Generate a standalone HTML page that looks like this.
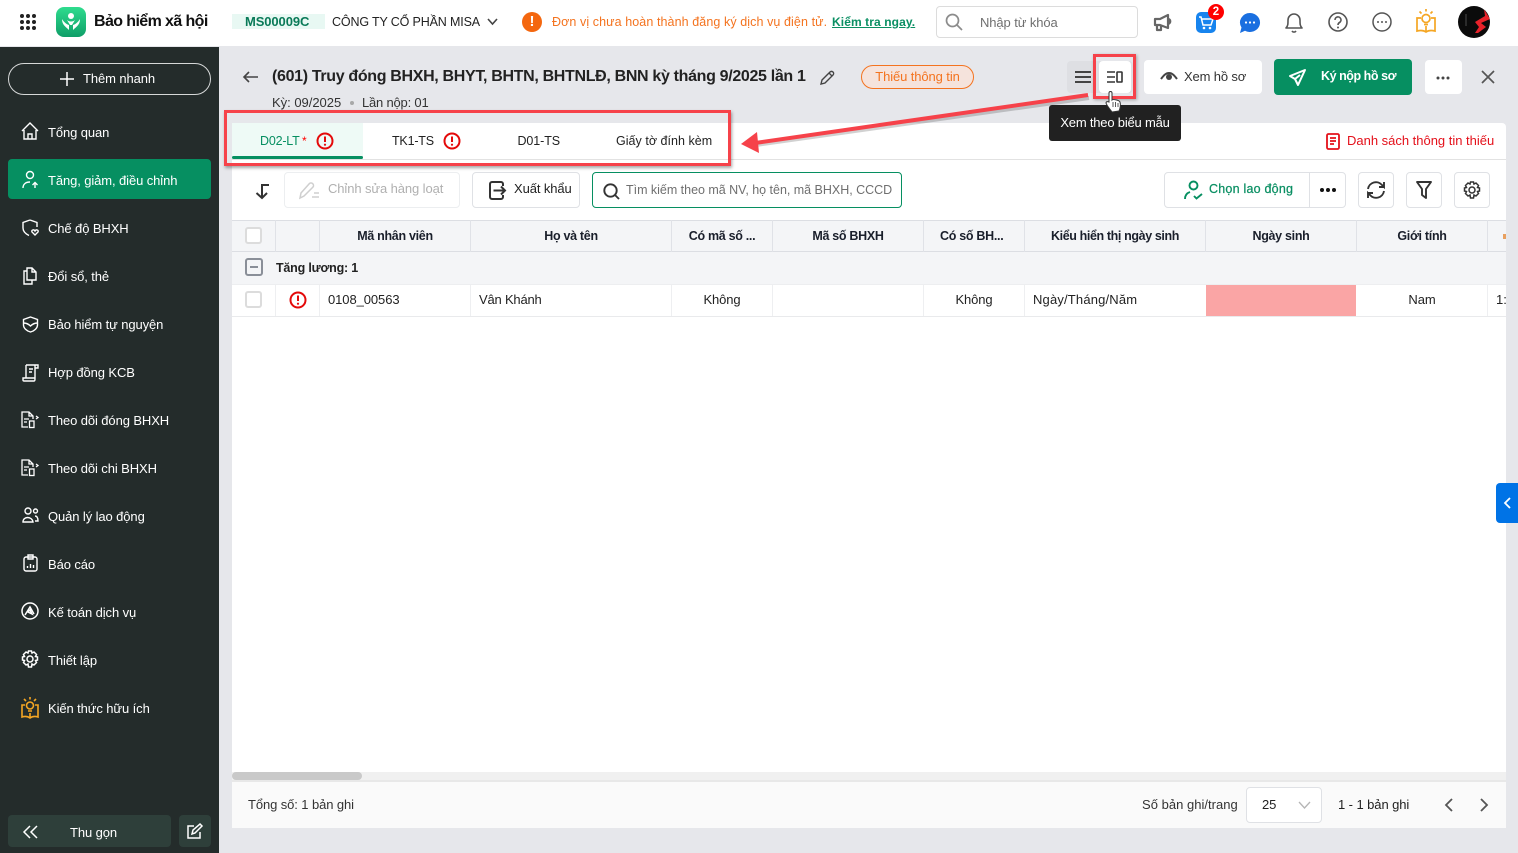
<!DOCTYPE html>
<html lang="vi"><head><meta charset="utf-8"><title>Bảo hiểm xã hội</title>
<style>
*{box-sizing:border-box}
html,body{margin:0;padding:0;width:1518px;height:853px;overflow:hidden;background:#e6e7eb;font-family:"Liberation Sans",sans-serif;font-size:13px;color:#1f1f1f}
.a{position:absolute}
.t{position:absolute;white-space:nowrap;line-height:16px;letter-spacing:-.1px}
.c{text-align:center}
.b{font-weight:700}
svg{position:absolute;overflow:visible;fill:none}
.btn{position:absolute;background:#fff;border:1px solid #dfe1e5;border-radius:4px}
.m{color:#fff;left:48px}
.th{position:absolute;top:228px;font-weight:700;font-size:12.5px;line-height:16px;text-align:center;white-space:nowrap;letter-spacing:-.3px;color:#1a1f2b}
.v{position:absolute;width:1px;background:#e0e2e7}
.cb{position:absolute;width:17px;height:17px;border:2px solid #dcdcdc;border-radius:3px;background:#fff}
.t.m{letter-spacing:-.1px}
</style></head><body>

<!-- top bar -->
<div class="a" style="left:0;top:0;width:1518px;height:46px;background:#fff"></div>
<svg style="left:20px;top:14px" width="16" height="16"><g fill="#222"><circle cx="2" cy="2" r="2"/><circle cx="8" cy="2" r="2"/><circle cx="14" cy="2" r="2"/><circle cx="2" cy="8" r="2"/><circle cx="8" cy="8" r="2"/><circle cx="14" cy="8" r="2"/><circle cx="2" cy="14" r="2"/><circle cx="8" cy="14" r="2"/><circle cx="14" cy="14" r="2"/></g></svg>
<svg style="left:56px;top:7px" width="30" height="30"><defs><linearGradient id="g" x1="0" y1="0" x2="0" y2="1"><stop offset="0" stop-color="#2fdc8e"/><stop offset="1" stop-color="#0f9e68"/></linearGradient></defs><rect width="30" height="30" rx="8" fill="url(#g)"/><circle cx="15" cy="9" r="3" fill="#fff"/><path d="M6 12c0 6 4 8 7 11v-5c-3-1-5-3-7-6zM24 12c0 6-4 8-7 11v-5c3-1 5-3 7-6zM11 13c2 2 6 2 8 0l-3 5h-2z" fill="#fff"/></svg>
<div class="t b" style="left:94px;top:12px;font-size:16px;line-height:20px;color:#111;letter-spacing:-.6px">Bảo hiểm xã hội</div>
<div class="a" style="left:232px;top:14px;width:93px;height:15px;background:#e8f8f3"></div>
<div class="t b" style="left:245px;top:14px;color:#0a7a58;font-size:13px;letter-spacing:-.1px">MS00009C</div>
<div class="t" style="left:332px;top:14px;font-size:12.5px;color:#222;letter-spacing:-.15px">CÔNG TY CỔ PHẦN MISA</div>
<svg style="left:487px;top:18px" width="11" height="8"><path d="M1 1l4.500 5L10 1" stroke="#444" stroke-width="1.600"/></svg>
<div class="a" style="left:522px;top:12px;width:20px;height:20px;border-radius:50%;background:#f4670f;color:#fff;font-weight:700;font-size:15px;line-height:20px;text-align:center">!</div>
<div class="t" style="left:552px;top:14px;color:#f4731f;font-size:12.500px;letter-spacing:.09px">Đơn vị chưa hoàn thành đăng ký dịch vụ điện tử.</div>
<div class="t b" style="left:832px;top:14px;color:#0a8f63;text-decoration:underline;font-size:12px;letter-spacing:.1px">Kiểm tra ngay.</div>
<div class="a" style="left:936px;top:6px;width:202px;height:32px;border:1px solid #dcdcdc;border-radius:4px"></div>
<svg style="left:945px;top:13px" width="18" height="18"><circle cx="7.500" cy="7.500" r="6" stroke="#8c8c8c" stroke-width="1.700"/><path d="M12 12l5 5" stroke="#8c8c8c" stroke-width="1.700"/></svg>
<div class="t" style="left:980px;top:15px;color:#6f6f6f">Nhập từ khóa</div>
<svg style="left:1153px;top:14px" width="20" height="18"><path d="M2 5h5l8-4v13l-8-3H2zM4 11v5h4v-5M15 5c3 .5 3 4 0 5" stroke="#666" stroke-width="2.200" stroke-linejoin="round"/></svg>
<svg style="left:1196px;top:12px" width="20" height="21"><rect width="20" height="21" rx="5" fill="#1784ee"/><path d="M3 5h2l2 8h8l2-6H6" stroke="#fff" stroke-width="1.500"/><circle cx="8" cy="16" r="1.300" fill="#fff"/><circle cx="14" cy="16" r="1.300" fill="#fff"/></svg>
<div class="a b" style="left:1208px;top:4px;width:16px;height:16px;border-radius:50%;background:#f00;color:#fff;font-size:11.500px;line-height:16px;text-align:center;font-weight:700">2</div>
<svg style="left:1240px;top:13px" width="20" height="20"><path d="M10 0a10 9.500 0 1 1-5 17.700L0 20l1.500-5.500A10 9.500 0 0 1 10 0z" fill="#1a6fe0"/><circle cx="6" cy="9.500" r="1.100" fill="#fff"/><circle cx="10" cy="9.500" r="1.100" fill="#fff"/><circle cx="14" cy="9.500" r="1.100" fill="#fff"/></svg>
<svg style="left:1284px;top:12px" width="20" height="21"><path d="M2 16c2-2 2-4 2-8a6 6 0 0 1 12 0c0 4 0 6 2 8zM8 19c1 1.500 3 1.500 4 0" stroke="#555" stroke-width="1.600" stroke-linejoin="round"/></svg>
<svg style="left:1328px;top:12px" width="20" height="20"><circle cx="10" cy="10" r="9" stroke="#555" stroke-width="1.600"/><path d="M7 8a3 3 0 1 1 4.500 2.500c-1 .6-1.500 1-1.500 2.500" stroke="#555" stroke-width="1.600"/><circle cx="10" cy="15.500" r="1" fill="#555"/></svg>
<svg style="left:1372px;top:12px" width="20" height="20"><circle cx="10" cy="10" r="9" stroke="#555" stroke-width="1.500"/><circle cx="6" cy="10" r="1" fill="#555"/><circle cx="10" cy="10" r="1" fill="#555"/><circle cx="14" cy="10" r="1" fill="#555"/></svg>
<svg style="left:1416px;top:9px" width="20" height="23" stroke="#f5a623" stroke-width="1.700"><path d="M5 9H1v13c4-1 7-.5 9 1 2-1.500 5-2 9-1V9h-4M10 17v6"/><circle cx="10" cy="9.500" r="4"/><path d="M8 15.500h4M10 0v2.500M3.500 2.500l2 2M16.500 2.500l-2 2"/></svg>
<svg style="left:1458px;top:6px" width="32" height="32"><defs><clipPath id="av"><circle cx="16" cy="16" r="16"/></clipPath></defs><circle cx="16" cy="16" r="16" fill="#0b0b0b"/><path d="M26 3L32 13 L23 17 L28 21 L20 27 L17 27 L21 21 L17 16 L27 10z" fill="#e8222a" clip-path="url(#av)"/><path d="M8 8v12" stroke="#2b2b2b" stroke-width="2"/></svg>

<!-- sidebar -->
<div class="a" style="left:0;top:47px;width:219px;height:806px;background:#242c2b"></div>
<div class="a" style="left:8px;top:63px;width:203px;height:32px;border:1px solid #d6d8d8;border-radius:16px"></div>
<svg style="left:60px;top:72px" width="14" height="14"><path d="M7 0v14M0 7h14" stroke="#fff" stroke-width="1.500"/></svg>
<div class="t m" style="left:83px;top:71px">Thêm nhanh</div>
<div class="a" style="left:8px;top:159px;width:203px;height:40px;background:#068f61;border-radius:4px"></div>
<div class="t m" style="top:125px">Tổng quan</div>
<div class="t m" style="top:173px">Tăng, giảm, điều chỉnh</div>
<div class="t m" style="top:221px">Chế độ BHXH</div>
<div class="t m" style="top:269px">Đổi sổ, thẻ</div>
<div class="t m" style="top:317px">Bảo hiểm tự nguyện</div>
<div class="t m" style="top:365px">Hợp đồng KCB</div>
<div class="t m" style="top:413px">Theo dõi đóng BHXH</div>
<div class="t m" style="top:461px">Theo dõi chi BHXH</div>
<div class="t m" style="top:509px">Quản lý lao động</div>
<div class="t m" style="top:557px">Báo cáo</div>
<div class="t m" style="top:605px">Kế toán dịch vụ</div>
<div class="t m" style="top:653px">Thiết lập</div>
<div class="t m" style="top:701px">Kiến thức hữu ích</div>

<svg style="left:21px;top:122px" width="18" height="18" stroke="#fff" stroke-width="1.400"><path d="M1 9l8-8 8 8M3 8v9h12V8M7 17v-5h4v5"/></svg>
<svg style="left:22px;top:170px" width="18" height="20" stroke="#fff" stroke-width="1.400"><circle cx="8" cy="5" r="3.500"/><path d="M1 18c0-4 3-6 7-6M13 18v-5M10.500 15l2.500-2.500 2.500 2.500"/></svg>
<svg style="left:22px;top:219px" width="18" height="18" stroke="#fff" stroke-width="1.400"><path d="M8 1l7 2.500V8M8 1L1 3.500V9c0 4 3 6 6 7.500"/><path d="M13 16l-3-3c-1-2 2-3 3-1 1-2 4-1 3 1z"/></svg>
<svg style="left:22px;top:267px" width="16" height="18" stroke="#fff" stroke-width="1.400"><path d="M5 1h5l4 4v8H5zM10 1v4h4M5 4H2v13h8v-4"/></svg>
<svg style="left:22px;top:316px" width="17" height="17" stroke="#fff" stroke-width="1.400"><path d="M8.500 1l7 2.500V9c0 3-3 6-7 7-4-1-7-4-7-7V3.500zM1.500 7c3 0 5 1 7 3 2-2 4-3 7-3"/></svg>
<svg style="left:22px;top:364px" width="17" height="18" stroke="#fff" stroke-width="1.400"><path d="M4 1h9v13M4 1v13H1v2c0 1 1 1 1 1h10c1 0 1-1 1-3H4M7 5h4M7 8h3M13 1h3v3h-3"/></svg>
<svg style="left:21px;top:411px" width="19" height="18" stroke="#fff" stroke-width="1.300"><path d="M7 16H1V1h7l4 4v3M8 1v4h4M3 8h5M3 11h3M15 5l2 1.500L15 8"/><rect x="8.500" y="10" width="4.500" height="6.500"/></svg>
<svg style="left:21px;top:459px" width="19" height="18" stroke="#fff" stroke-width="1.300"><path d="M7 16H1V1h7l4 4v3M8 1v4h4M3 8h5M3 11h3M15 5l2 1.500L15 8"/><rect x="8.500" y="10" width="4.500" height="6.500"/></svg>
<svg style="left:22px;top:507px" width="17" height="16" stroke="#fff" stroke-width="1.400"><circle cx="6" cy="4" r="3"/><circle cx="13.500" cy="4" r="2"/><path d="M1 15c0-6 9-6 10 0zM13 9c2 0 3 2 3 5h-3"/></svg>
<svg style="left:23px;top:554px" width="15" height="18" stroke="#fff" stroke-width="1.400"><rect x="1" y="3" width="13" height="14" rx="2"/><path d="M5 1h5v4H5zM4.500 14v-2M7.500 14v-4M10.500 14v-3"/></svg>
<svg style="left:21px;top:602px" width="18" height="18" stroke="#fff" stroke-width="1.500"><circle cx="9" cy="9" r="8"/><path d="M4 13l5-8 4 7M7 10l2-2 2 4z"/></svg>
<svg style="left:21px;top:650px" width="18" height="18" stroke="#fff" stroke-width="1.500"><circle cx="9" cy="9" r="3"/><path d="M7.500 1h3l.5 2 2-1 2.500 2.500-1 2 2 .5v3l-2 .5 1 2L13 15l-2-1-.5 3h-3L7 14l-2 1-2.500-2.500 1-2-2-.5v-3l2-.5-1-2L5 2l2 1z"/></svg>
<svg style="left:21px;top:697px" width="18" height="21" stroke="#f5a623" stroke-width="1.600"><path d="M4 8H1v12c3-1 6-.5 8 1 2-1.500 5-2 8-1V8h-3M9 16v5"/><circle cx="9" cy="8.500" r="3.500"/><path d="M7 14h4M9 0v2.500M3 2l2 2M15 2l-2 2"/></svg>

<div class="a" style="left:8px;top:815px;width:163px;height:32px;background:#2e3f3a;border-radius:4px"></div>
<svg style="left:23px;top:826px" width="15" height="12" stroke="#fff" stroke-width="1.500"><path d="M7 0L1 6l6 6M14 0L8 6l6 6"/></svg>
<div class="t m" style="left:70px;top:825px">Thu gọn</div>
<div class="a" style="left:179px;top:815px;width:32px;height:32px;background:#2e3f3a;border-radius:4px"></div>
<svg style="left:187px;top:823px" width="16" height="16" stroke="#fff" stroke-width="1.500"><path d="M7 3H1v12h12V9M5 11l1-4 7-6 2 2-7 7z"/></svg>

<!-- page header -->
<svg style="left:243px;top:71px" width="15" height="12" stroke="#444" stroke-width="1.600"><path d="M15 6H1M6 1L1 6l5 5"/></svg>
<div class="t b" style="left:272px;top:66px;font-size:16px;line-height:21px;color:#222;letter-spacing:-.33px">(601) Truy đóng BHXH, BHYT, BHTN, BHTNLĐ, BNN kỳ tháng 9/2025 lần 1</div>
<svg style="left:820px;top:70px" width="15" height="15" stroke="#444" stroke-width="1.400"><path d="M1 14l1-4 8-8a1.500 1.500 0 0 1 3 3l-8 8zM9 3l3 3"/></svg>
<div class="t" style="left:272px;top:95px;color:#333;letter-spacing:-.02px">Kỳ: 09/2025</div>
<div class="a" style="left:350px;top:101px;width:4px;height:4px;border-radius:50%;background:#a8a8a8"></div>
<div class="t" style="left:362px;top:95px;color:#333;letter-spacing:-.2px">Lần nộp: 01</div>
<div class="a" style="left:861px;top:65px;width:113px;height:24px;border:1px solid #f4731f;border-radius:12px;background:#f5e3dc"></div>
<div class="t c" style="left:861px;top:69px;width:113px;color:#f4731f">Thiếu thông tin</div>

<div class="a" style="left:1067px;top:61px;width:66px;height:32px;background:#dedfe3;border-radius:4px"></div>
<div class="a" style="left:1099px;top:61px;width:32px;height:32px;background:#fff;border-radius:4px"></div>
<svg style="left:1075px;top:71px" width="16" height="12" stroke="#444" stroke-width="2"><path d="M0 1h16M0 6h16M0 11h16"/></svg>
<svg style="left:1107px;top:71px" width="16" height="12" stroke="#333" stroke-width="1.600"><path d="M0 1h8M0 6h8M0 11h8"/><rect x="10" y="1" width="5" height="10" rx=".5"/></svg>
<div class="a" style="left:1144px;top:60px;width:118px;height:34px;background:#fff;border-radius:4px"></div>
<svg style="left:1160px;top:71px" width="18" height="11"><path d="M1 8c3-4 5-6 8-6s5 2 8 6" stroke="#444" stroke-width="2"/><circle cx="9" cy="6" r="3" fill="#444"/></svg>
<div class="t" style="left:1184px;top:69px;color:#333;letter-spacing:-.15px">Xem hồ sơ</div>
<div class="a" style="left:1274px;top:59px;width:138px;height:36px;background:#068f61;border-radius:4px"></div>
<svg style="left:1289px;top:69px" width="16" height="17" stroke="#fff" stroke-width="2"><path d="M16 1L1 7l5 3 3 6zM6 10l5-4" stroke-linejoin="round"/></svg>
<div class="t b" style="left:1321px;top:68px;color:#fff;font-size:12.500px;letter-spacing:-.45px">Ký nộp hồ sơ</div>
<div class="a" style="left:1425px;top:60px;width:37px;height:34px;background:#fff;border-radius:4px"></div>
<svg style="left:1436px;top:76px" width="14" height="4"><g fill="#444"><circle cx="2" cy="2" r="1.500"/><circle cx="7" cy="2" r="1.500"/><circle cx="12" cy="2" r="1.500"/></g></svg>
<svg style="left:1482px;top:71px" width="12" height="12" stroke="#555" stroke-width="1.700"><path d="M0 0l12 12M12 0L0 12"/></svg>

<!-- card -->
<div class="a" style="left:232px;top:123px;width:1274px;height:705px;background:#fff;border-radius:4px 4px 0 0"></div>
<div class="a" style="left:232px;top:159px;width:1274px;height:1px;background:#e2e2e2"></div>
<!-- tabs -->
<div class="a" style="left:232px;top:123px;width:131px;height:36px;background:#eefaf6"></div>
<div class="a" style="left:232px;top:156px;width:131px;height:3px;background:#068f61;border-radius:2px"></div>
<div class="t" style="left:260px;top:133px;color:#068f61;font-size:12.500px;letter-spacing:-.2px">D02-LT</div>
<div class="t" style="left:302px;top:133px;color:#f00;font-size:12px">*</div>
<svg style="left:316px;top:132px" width="18" height="18"><circle cx="9" cy="9" r="7.500" stroke="#e40a0a" stroke-width="2"/><path d="M9 4.500v5.500" stroke="#e40a0a" stroke-width="2"/><circle cx="9" cy="12.700" r="1.100" fill="#e40a0a"/></svg>
<div class="t" style="left:392px;top:133px;font-size:12.500px;color:#222;letter-spacing:-.2px">TK1-TS</div>
<svg style="left:443px;top:132px" width="18" height="18"><circle cx="9" cy="9" r="7.500" stroke="#e40a0a" stroke-width="2"/><path d="M9 4.500v5.500" stroke="#e40a0a" stroke-width="2"/><circle cx="9" cy="12.700" r="1.100" fill="#e40a0a"/></svg>
<div class="t" style="left:517.500px;top:133px;font-size:12.500px;color:#222;letter-spacing:-.1px">D01-TS</div>
<div class="t" style="left:616px;top:133px;font-size:12.500px;color:#222;letter-spacing:.03px">Giấy tờ đính kèm</div>
<svg style="left:1326px;top:133px" width="14" height="17" stroke="#e4101a" stroke-width="1.800"><rect x="1" y="1" width="12" height="15" rx="1.500"/><path d="M4 5h6M4 8h6M4 11h4"/></svg>
<div class="t" style="left:1347px;top:133px;color:#e4101a;font-size:13px;letter-spacing:-.01px">Danh sách thông tin thiếu</div>

<!-- toolbar -->
<svg style="left:255px;top:184px" width="14" height="15" stroke="#333" stroke-width="2"><path d="M14 1H7v13M1.500 9L7 14l5-5"/></svg>
<div class="btn" style="left:284px;top:172px;width:176px;height:36px;border-color:#eceef0"></div>
<svg style="left:299px;top:182px" width="21" height="17" stroke="#cfcfcf" stroke-width="1.500"><path d="M1 16l1-5 8-9a2 2 0 0 1 4 3l-9 9zM13 15h7M15 11h5"/></svg>
<div class="t" style="left:328px;top:181px;color:#b0b0b0;letter-spacing:-.1px">Chỉnh sửa hàng loạt</div>
<div class="btn" style="left:472px;top:172px;width:108px;height:36px"></div>
<svg style="left:489px;top:181px" width="17" height="19" stroke="#333" stroke-width="2"><path d="M14 5V3a2 2 0 0 0-2-2H3a2 2 0 0 0-2 2v13a2 2 0 0 0 2 2h9a2 2 0 0 0 2-2v-2M4.500 9.500H16M12 5.500l4 4-4 4"/></svg>
<div class="t" style="left:514px;top:181px;color:#222;font-size:13px">Xuất khẩu</div>
<div class="a" style="left:592px;top:172px;width:310px;height:36px;border:1px solid #068f61;border-radius:4px;background:#fff"></div>
<svg style="left:603px;top:183px" width="17" height="17" stroke="#333" stroke-width="1.900"><circle cx="7.500" cy="7.500" r="6.200"/><path d="M12 12l4 4"/></svg>
<div class="t" style="left:626px;top:182px;color:#6f6f6f;font-size:12.500px;letter-spacing:-.02px">Tìm kiếm theo mã NV, họ tên, mã BHXH, CCCD</div>
<div class="btn" style="left:1164px;top:172px;width:182px;height:36px"></div>
<div class="v" style="left:1309px;top:173px;height:34px;background:#dfe1e5"></div>
<svg style="left:1184px;top:180px" width="19" height="20" stroke="#068f61" stroke-width="1.900"><circle cx="9.500" cy="5.500" r="4"/><path d="M1 19c0-4 2-6 5-7M10 16l2.500 2.500L18 14"/></svg>
<div class="t b" style="left:1209px;top:181px;color:#0a8f63;font-size:12.500px;font-weight:400;-webkit-text-stroke:.25px #0a8f63;letter-spacing:.22px">Chọn lao động</div>
<svg style="left:1320px;top:188px" width="16" height="4"><g fill="#111"><circle cx="2" cy="2" r="2"/><circle cx="8" cy="2" r="2"/><circle cx="14" cy="2" r="2"/></g></svg>
<div class="btn" style="left:1358px;top:172px;width:36px;height:36px"></div>
<svg style="left:1367px;top:181px" width="18" height="18" stroke="#333" stroke-width="1.900"><path d="M1 8a8 8 0 0 1 14-4l2 2V1M17 10a8 8 0 0 1-14 4l-2-2v5M17 6h-5M1 12h5"/></svg>
<div class="btn" style="left:1406px;top:172px;width:36px;height:36px"></div>
<svg style="left:1416px;top:181px" width="16" height="18" stroke="#333" stroke-width="1.900"><path d="M1 1h14l-5 7v9l-4-3V8z" stroke-linejoin="round"/></svg>
<div class="btn" style="left:1454px;top:172px;width:36px;height:36px"></div>
<svg style="left:1463px;top:181px" width="18" height="18" stroke="#333" stroke-width="1.500"><circle cx="9" cy="9" r="3"/><path d="M7.500 1h3l.5 2 2-1 2.500 2.500-1 2 2 .5v3l-2 .5 1 2L13 15l-2-1-.5 3h-3L7 14l-2 1-2.500-2.500 1-2-2-.5v-3l2-.5-1-2L5 2l2 1z"/></svg>

<!-- table -->
<div class="a" style="left:232px;top:220px;width:1274px;height:32px;background:#f4f5f7;border-top:1px solid #dcdee3;border-bottom:1px solid #dcdee3"></div>
<div class="a" style="left:232px;top:252px;width:1274px;height:33px;background:#f4f5f7;border-bottom:1px solid #edeef0"></div>
<div class="a" style="left:232px;top:316px;width:1274px;height:1px;background:#e9eaec"></div>
<div class="a" style="left:1206px;top:285px;width:150px;height:31px;background:#faa5a5"></div>
<div class="v" style="left:275px;top:220px;height:32px"></div><div class="v" style="left:319px;top:220px;height:32px"></div><div class="v" style="left:470px;top:220px;height:32px"></div><div class="v" style="left:671px;top:220px;height:32px"></div><div class="v" style="left:772px;top:220px;height:32px"></div><div class="v" style="left:923px;top:220px;height:32px"></div><div class="v" style="left:1024px;top:220px;height:32px"></div><div class="v" style="left:1205px;top:220px;height:32px"></div><div class="v" style="left:1356px;top:220px;height:32px"></div><div class="v" style="left:1487px;top:220px;height:32px"></div>
<div class="v" style="left:275px;top:285px;height:31px;background:#eeeff1"></div><div class="v" style="left:319px;top:285px;height:31px;background:#eeeff1"></div><div class="v" style="left:470px;top:285px;height:31px;background:#eeeff1"></div><div class="v" style="left:671px;top:285px;height:31px;background:#eeeff1"></div><div class="v" style="left:772px;top:285px;height:31px;background:#eeeff1"></div><div class="v" style="left:923px;top:285px;height:31px;background:#eeeff1"></div><div class="v" style="left:1024px;top:285px;height:31px;background:#eeeff1"></div><div class="v" style="left:1487px;top:285px;height:31px;background:#eeeff1"></div>
<div class="cb" style="left:245px;top:227px"></div>
<div class="th" style="left:320px;width:150px">Mã nhân viên</div>
<div class="th" style="left:471px;width:200px">Họ và tên</div>
<div class="th" style="left:672px;width:100px">Có mã số ...</div>
<div class="th" style="left:773px;width:150px">Mã số BHXH</div>
<div class="th" style="left:940px;text-align:left">Có số BH...</div>
<div class="th" style="left:1025px;width:180px;letter-spacing:-.38px">Kiểu hiển thị ngày sinh</div>
<div class="th" style="left:1206px;width:150px">Ngày sinh</div>
<div class="th" style="left:1357px;width:130px">Giới tính</div>
<div class="a" style="left:1503px;top:234px;width:3px;height:5px;background:#e8a060"></div>
<div class="a" style="left:245px;top:258px;width:18px;height:18px;border:2px solid #8a8f98;border-radius:3px;background:#f4f5f7"></div>
<div class="a" style="left:250px;top:266px;width:8px;height:2px;background:#8a8f98"></div>
<div class="t b" style="left:276px;top:260px;font-size:12.500px;color:#222;letter-spacing:-.2px">Tăng lương: 1</div>
<div class="cb" style="left:245px;top:291px"></div>
<svg style="left:289px;top:291px" width="18" height="18"><circle cx="9" cy="9" r="7.500" stroke="#e40a0a" stroke-width="2"/><path d="M9 4.500v5.500" stroke="#e40a0a" stroke-width="2"/><circle cx="9" cy="12.700" r="1.100" fill="#e40a0a"/></svg>
<div class="t" style="left:328px;top:292px;color:#222;letter-spacing:-.08px">0108_00563</div>
<div class="t" style="left:479px;top:292px;color:#222;letter-spacing:-.2px">Vân Khánh</div>
<div class="t c" style="left:672px;top:292px;width:100px;color:#222">Không</div>
<div class="t c" style="left:924px;top:292px;width:100px;color:#222">Không</div>
<div class="t" style="left:1033px;top:292px;color:#222;letter-spacing:.17px">Ngày/Tháng/Năm</div>
<div class="t c" style="left:1357px;top:292px;width:130px;color:#222">Nam</div>
<div class="a" style="left:1496px;top:292px;width:10px;height:16px;overflow:hidden;line-height:16px;color:#222">1:</div>

<!-- scrollbar / footer -->
<div class="a" style="left:232px;top:772px;width:1274px;height:8px;background:#f0f0f0"></div>
<div class="a" style="left:232px;top:772px;width:130px;height:8px;background:#c9c9c9;border-radius:4px"></div>
<div class="a" style="left:232px;top:780px;width:1274px;height:48px;background:#fafafa;border-top:2px solid #e8e8e8"></div>
<div class="t" style="left:248px;top:797px;color:#333">Tổng số: 1 bản ghi</div>
<div class="t" style="left:1142px;top:797px;color:#333;letter-spacing:.02px">Số bản ghi/trang</div>
<div class="btn" style="left:1246px;top:787px;width:76px;height:36px"></div>
<div class="t" style="left:1262px;top:797px;color:#222">25</div>
<svg style="left:1299px;top:802px" width="11" height="7" stroke="#b5b5b5" stroke-width="1.300"><path d="M0 0l5.500 6L11 0"/></svg>
<div class="t" style="left:1338px;top:797px;color:#222;letter-spacing:-.08px">1 - 1 bản ghi</div>
<svg style="left:1444px;top:798px" width="9" height="14" stroke="#555" stroke-width="1.800"><path d="M8 1L2 7l6 6"/></svg>
<svg style="left:1480px;top:798px" width="9" height="14" stroke="#555" stroke-width="1.800"><path d="M1 1l6 6-6 6"/></svg>
<div class="a" style="left:1496px;top:483px;width:22px;height:40px;background:#0073e6;border-radius:4px 0 0 4px"></div>
<svg style="left:1504px;top:497px" width="7" height="12" stroke="#fff" stroke-width="1.800"><path d="M6 1L1 6l5 5"/></svg>

<!-- annotations -->
<div class="a" style="left:224px;top:110px;width:507px;height:56px;border:3px solid #f6424a;box-shadow:1px 2px 3px rgba(0,0,0,.35)"></div>
<div class="a" style="left:1093px;top:54px;width:43px;height:45px;border:3px solid #f6424a;box-shadow:1px 1px 3px rgba(0,0,0,.3)"></div>
<svg style="left:740px;top:92px" width="350" height="62"><path d="M348 3L15 50" stroke="rgba(0,0,0,.18)" stroke-width="4" transform="translate(1 3)"/><path d="M348 3L15 51" stroke="#f6424a" stroke-width="4"/><path d="M1 52l16-12 2 21z" fill="#f6424a"/></svg>
<div class="a" style="left:1049px;top:105px;width:132px;height:36px;background:#212121;border-radius:3px"></div>
<div class="t c" style="left:1049px;top:115px;width:132px;color:#fff;letter-spacing:-.2px">Xem theo biểu mẫu</div>
<svg style="left:1105px;top:91px" width="18" height="24"><path d="M4 2c0-2 3-2 3 0v7c1-1 7 0 8 2 1 3 0 7-1 9l-7 1c-2-3-5-6-6-9 0-1 1-2 3-1z" fill="#fff" stroke="#333" stroke-width="1"/><path d="M8 11v5M10.500 11v5M13 12v4" stroke="#333" stroke-width=".8"/></svg>
</body></html>
